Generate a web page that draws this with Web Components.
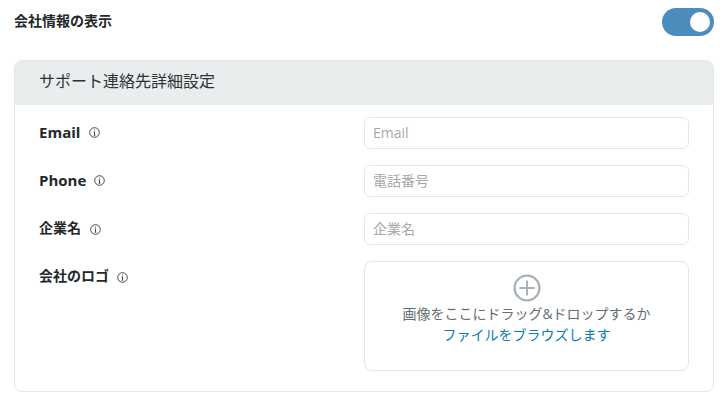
<!DOCTYPE html>
<html lang="ja"><head><meta charset="utf-8">
<style>
html,body{margin:0;padding:0;background:#fff}
body{width:727px;height:402px;overflow:hidden;font-family:"Open Sans","Noto Sans","Noto Sans CJK JP",sans-serif;color:#2d3436}
</style></head><body>
<settings-page>
<toggle-row label="会社情報の表示"></toggle-row>
<settings-card heading="サポート連絡先詳細設定">
<field-row label="Email" size="15" gap="9" pad="3" placeholder="Email"></field-row>
<field-row label="Phone" size="15" gap="8" pad="3" placeholder="電話番号"></field-row>
<field-row label="企業名" size="14" gap="9" pad="2" placeholder="企業名"></field-row>
<logo-row label="会社のロゴ"></logo-row>
</settings-card>
</settings-page>
<script>
const font='"Open Sans","Noto Sans CJK JP",sans-serif';
const define=(n,css,html)=>customElements.define(n,class extends HTMLElement{
 connectedCallback(){const r=this.attachShadow({mode:'open'});
  r.innerHTML='<style>'+css+'</style>'+html(this);}
});
define('settings-page',':host{display:flex;flex-direction:column;padding:0 13px 0 14px;height:402px;box-sizing:border-box}',()=>'<slot></slot>');
define('info-icon',':host{display:inline-flex;width:11px;height:11px;margin-top:2px}svg{display:block}',()=>
 '<svg width="11" height="11" viewBox="0 0 11 11" fill="none" stroke="#444a4d"><circle cx="5.5" cy="5.5" r="4.8" stroke-width="1"/><path d="M5.5 4.8V8.2M4.6 8.2H6.4M4.7 4.8H5.5" stroke-width="1"/><path d="M5.5 2.6V3.6" stroke-width="1.1"/></svg>');
define('toggle-row',`:host{display:flex;align-items:center;justify-content:space-between;height:44px;margin-bottom:16px}
.l{font:700 14px/20px ${font};color:#23282a;margin-top:-3px}
.t{width:52px;height:28px;border-radius:14px;background:#4c8dbd;display:flex;align-items:center;justify-content:flex-end;padding-right:4px;box-sizing:border-box}
.k{width:20px;height:20px;border-radius:50%;background:#fff}`,
 h=>`<span class="l">${h.getAttribute('label')}</span><span class="t"><span class="k"></span></span>`);
define('settings-card',`:host{display:block;border:1px solid #e3e6e8;border-radius:8px;overflow:hidden;height:332px;box-sizing:border-box}
.h{height:44px;background:#e9edee;padding:0 0 5px 24px;box-sizing:border-box;display:flex;align-items:center;font:400 16px/22px ${font};color:#2d3436}
.b{padding:12px 24px 0;display:flex;flex-direction:column;gap:16px}`,
 h=>`<div class="h">${h.getAttribute('heading')}</div><div class="b"><slot></slot></div>`);
const labelCss=`.lab{width:325px;flex:none;display:flex;align-items:center;font:700 14px/20px ${font};color:#23282a;height:32px;box-sizing:border-box}`;
define('field-row',`:host{display:flex;height:32px}${labelCss}
input{flex:1;min-width:0;height:32px;box-sizing:border-box;border:1px solid #e3e6e8;border-radius:6px;padding:0 8px 2px;font:400 14px ${font};outline:none;background:#fff}
input::placeholder{color:#a4a9ac;opacity:1}`,
 h=>`<div class="lab" style="font-size:${h.getAttribute('size')}px;gap:${h.getAttribute('gap')}px;padding-bottom:${h.getAttribute('pad')}px"><span>${h.getAttribute('label')}</span><info-icon></info-icon></div><input placeholder="${h.getAttribute('placeholder')}">`);
define('logo-row',`:host{display:flex}${labelCss}
.lab{height:30px;gap:8px}
.d{flex:1;min-width:0;height:110px;box-sizing:border-box;border:1px solid #e3e6e8;border-radius:8px;display:flex;flex-direction:column;align-items:center;padding-top:12px;font:400 14px/21px ${font};color:#636e72}
svg{display:block;margin-bottom:1px}
a{color:#0b7cb0;text-decoration:none}`,
 h=>`<div class="lab"><span>${h.getAttribute('label')}</span><info-icon></info-icon></div>
 <div class="d"><svg width="28" height="28" viewBox="0 0 28 28" fill="none" stroke="#aab2b8" stroke-width="2.4"><circle cx="14" cy="14" r="12.4"/><path d="M14 6.5V21.5M6.5 14H21.5" stroke-width="2"/></svg>
 <span>画像をここにドラッグ&amp;ドロップするか</span><a href="#">ファイルをブラウズします</a></div>`);
</script>
</body></html>
